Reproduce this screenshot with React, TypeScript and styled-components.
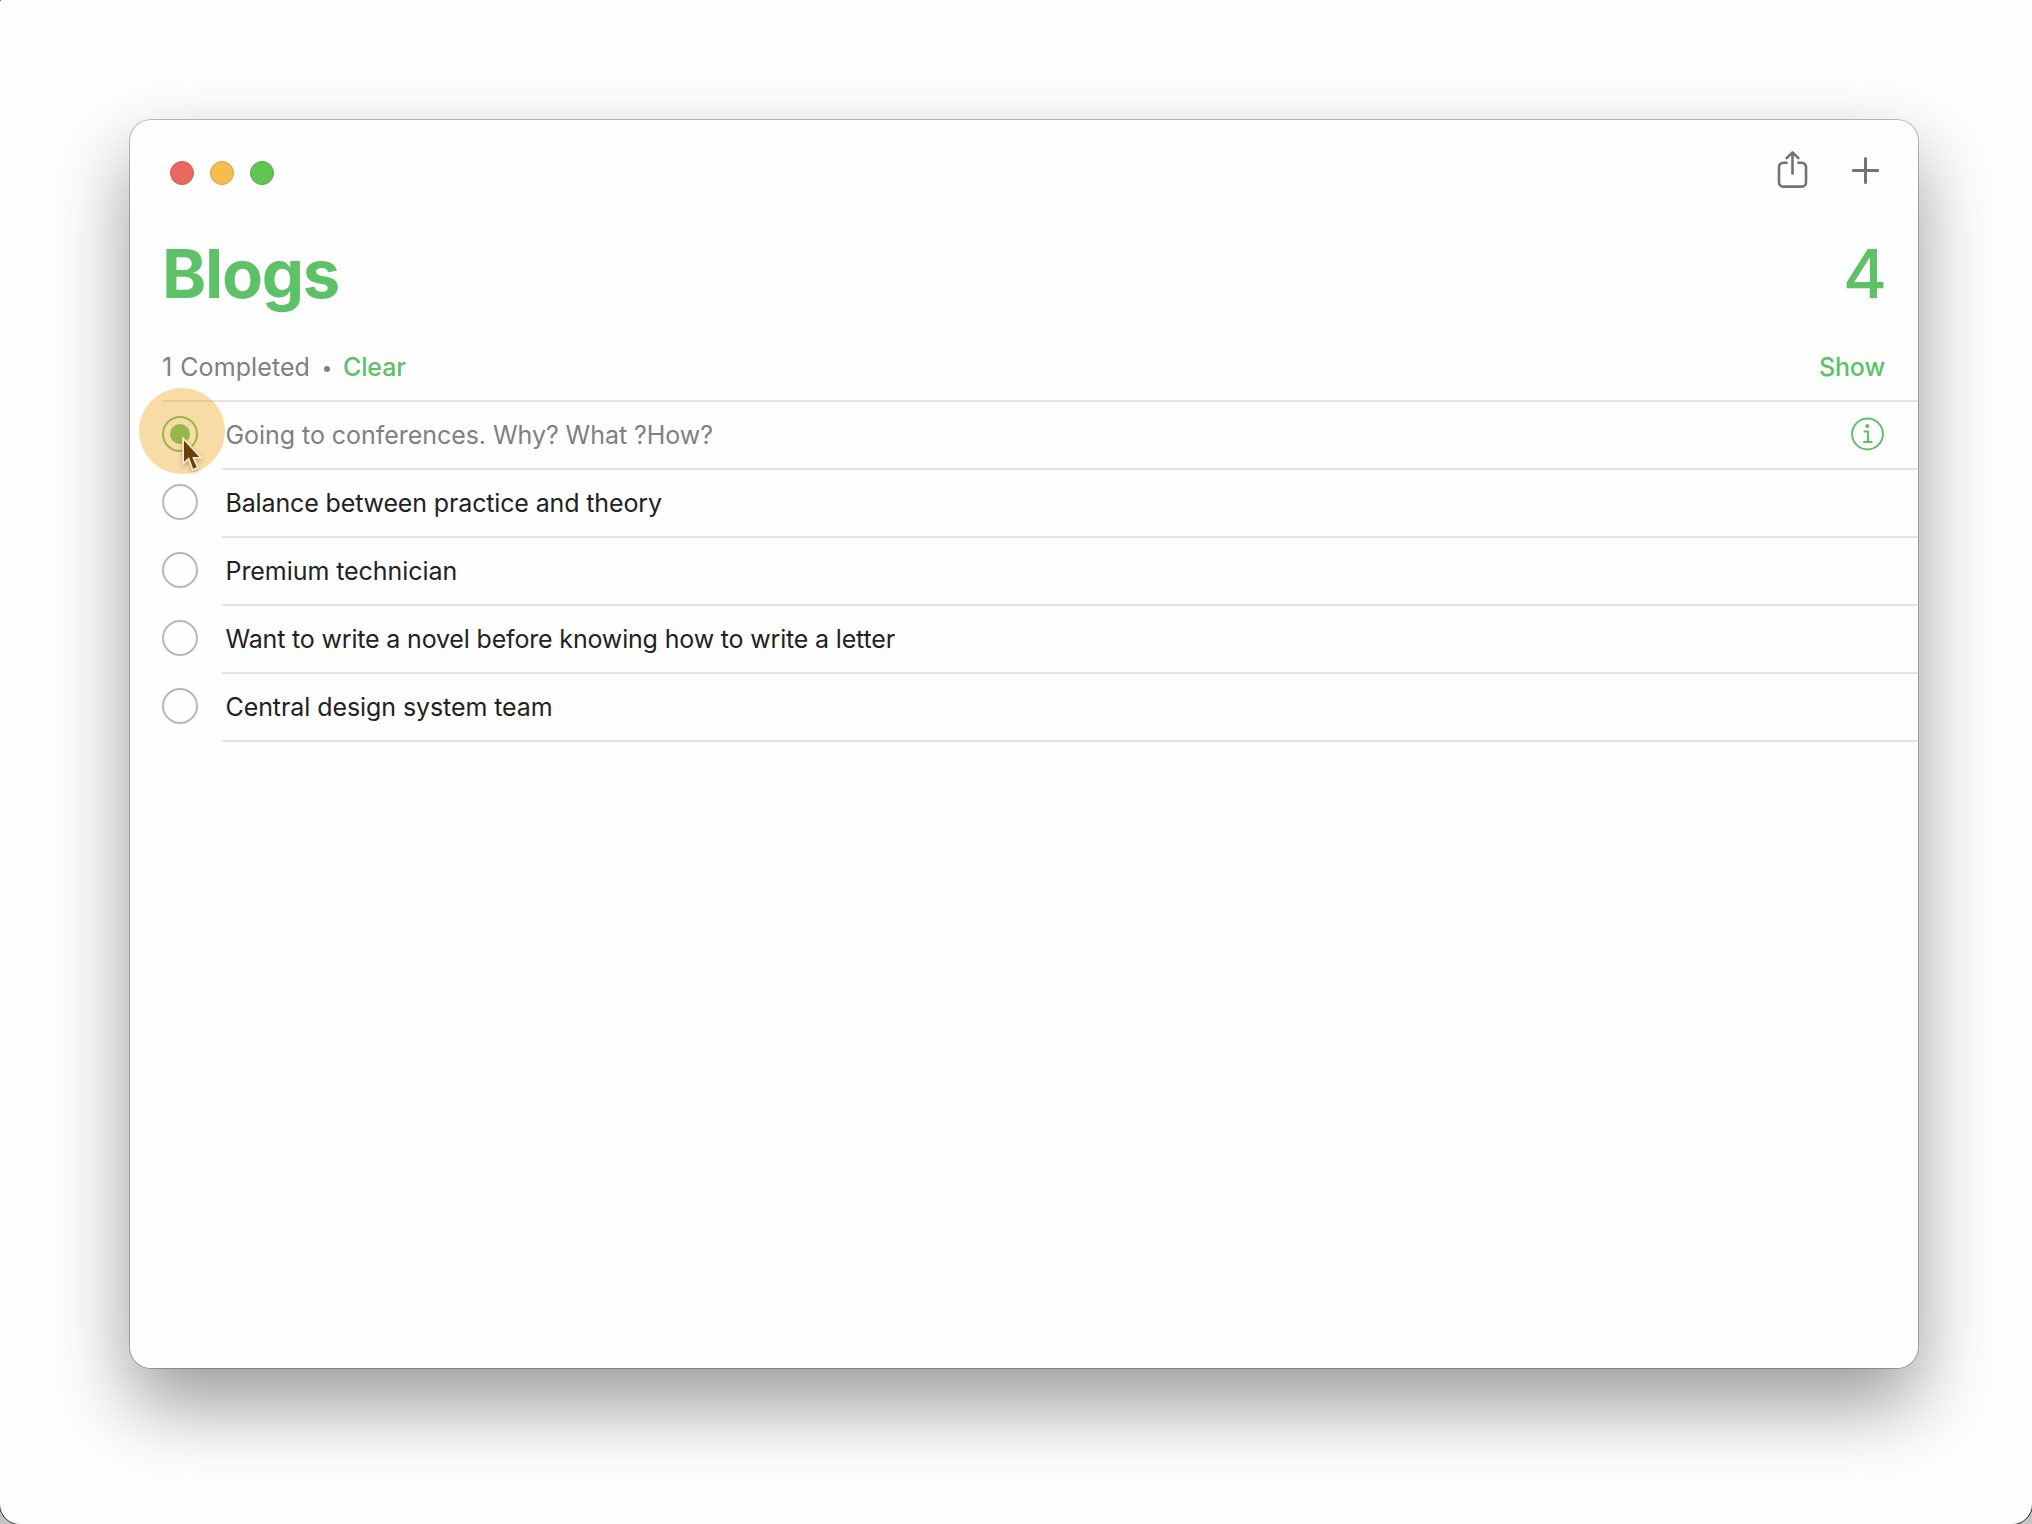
import React from "react";
import styled, { createGlobalStyle } from "styled-components";

const GREEN = "#5dc168";
const GREY = "#808080";

const GlobalStyle = createGlobalStyle`
  * { box-sizing: border-box; }
  html, body { margin: 0; padding: 0; background: #c4c4c4; }
  body { font-family: Inter, "Liberation Sans", sans-serif; -webkit-font-smoothing: antialiased; }
`;

const Desktop = styled.main`
  width: 2032px;
  height: 1524px;
  padding: 120px 114px 156px 130px;
  background: #fefefe;
  border-radius: 2px 0 20px 20px;
  box-shadow: 0 0 0 1px #3c3c3c;
  overflow: hidden;
`;

const Window = styled.section`
  width: 1788px;
  height: 1248px;
  border-radius: 21px;
  background: #fefefe;
  box-shadow: 0 0 0 1px rgba(0, 0, 0, 0.24), 0 36px 78px rgba(0, 0, 0, 0.4);
`;

const TitleBar = styled.header`
  display: flex;
  justify-content: space-between;
  align-items: flex-start;
  height: 104px;
  padding: 28px 36px 0 40px;
`;

const Lights = styled.div`
  display: flex;
  gap: 16px;
  padding-top: 13px;
`;

const Light = styled.span<{ $fill: string; $edge: string }>`
  width: 24px;
  height: 24px;
  border-radius: 50%;
  background: ${(p) => p.$fill};
  border: 1px solid ${(p) => p.$edge};
`;

const Tools = styled.div`
  display: flex;
  gap: 40px;
  color: #737373;
`;

const Icon = styled.svg`
  display: block;
  fill: none;
  stroke: currentColor;
  stroke-linecap: round;
  stroke-linejoin: round;
`;

const Heading = styled.div`
  display: flex;
  justify-content: space-between;
  height: 112px;
  padding: 10px 31px 0 32px;
  color: ${GREEN};
  line-height: 80px;
`;

const Title = styled.h1`
  margin: 0;
  font-size: 67px;
  font-weight: 700;
  letter-spacing: -1.3px;
`;

const Count = styled.span`
  font-size: 67px;
  font-weight: 500;
`;

const Summary = styled.div`
  display: flex;
  align-items: center;
  height: 64px;
  margin-left: 32px;
  padding: 0 33px 2px 0;
  font-size: 25px;
  color: ${GREY};
`;

const Completed = styled.span`
  letter-spacing: 0.1px;
  word-spacing: 0.8px;
`;

const Dot = styled.span`
  width: 6px;
  height: 6px;
  margin: 4px 13px 0 14px;
  border-radius: 50%;
  background: ${GREY};
`;

const Action = styled.button<{ $end?: boolean }>`
  margin: 0 0 0 ${(p) => (p.$end ? "auto" : "0")};
  padding: 0;
  border: 0;
  background: none;
  color: ${GREEN};
  font: inherit;
  font-weight: 500;
  letter-spacing: -0.15px;
`;

const List = styled.ul`
  margin: 0 0 0 32px;
  padding: 0;
  list-style: none;
  border-top: 2px solid #e3e3e3;
`;

const Row = styled.li`
  position: relative;
  display: flex;
  align-items: center;
  gap: 24px;
  height: 68px;
`;

const Check = styled.span<{ $on?: boolean }>`
  display: grid;
  place-items: center;
  flex: none;
  width: 36px;
  height: 36px;
  margin-bottom: 4px;
  border: 2px solid ${(p) => (p.$on ? GREEN : "#b9b9b9")};
  border-radius: 50%;
  &::after {
    content: "";
    width: 20px;
    height: 20px;
    border-radius: 50%;
    background: ${(p) => (p.$on ? GREEN : "transparent")};
  }
`;

const Label = styled.div<{ $muted?: boolean; $tracking: number }>`
  display: flex;
  align-items: center;
  justify-content: space-between;
  flex: 1;
  height: 68px;
  padding: 0 34px 0 3.5px;
  border-bottom: 2px solid #e3e3e3;
  font-size: 25px;
  letter-spacing: ${(p) => p.$tracking}px;
  color: ${(p) => (p.$muted ? GREY : "#222")};
`;

const Info = styled(Icon)`
  color: ${GREEN};
  margin-bottom: 3px;
`;

const Pointer = styled.svg`
  position: absolute;
  left: 18px;
  top: 33px;
  width: 26px;
  height: 42px;
  overflow: visible;
  filter: drop-shadow(0 2px 2px rgba(60, 35, 0, 0.3));
`;

const ClickHalo = styled.span`
  position: absolute;
  left: -23px;
  top: -14px;
  width: 86px;
  height: 86px;
  border-radius: 50%;
  background: rgba(240, 167, 32, 0.4);
`;

const items = [
  { text: "Going to conferences. Why? What ?How?", done: true, tracking: -0.05 },
  { text: "Balance between practice and theory", tracking: -0.14 },
  { text: "Premium technician", tracking: -0.06 },
  { text: "Want to write a novel before knowing how to write a letter", tracking: -0.17 },
  { text: "Central design system team", tracking: -0.08 },
];

export default function App() {
  return (
    <>
      <GlobalStyle />
      <Desktop>
        <Window>
          <TitleBar>
            <Lights>
              <Light $fill="#ea695e" $edge="#cf5a50" />
              <Light $fill="#f4be4f" $edge="#d6a343" />
              <Light $fill="#61c554" $edge="#52a846" />
            </Lights>
            <Tools>
              <Icon width="36" height="44" viewBox="0 0 36 44" strokeWidth="2.6">
                <path d="M13.6 14.8H9.2A4.2 4.2 0 0 0 5 19v15.4a4.2 4.2 0 0 0 4.2 4.2h18.6a4.2 4.2 0 0 0 4.2-4.2V19a4.2 4.2 0 0 0-4.2-4.2h-4.4" strokeLinecap="butt" />
                <path d="M18.5 25.6V4.6M12.6 10.2l5.9-5.9 5.9 5.9" strokeWidth="2.6" />
              </Icon>
              <Icon width="32" height="44" viewBox="0 0 32 44" strokeWidth="3">
                <path d="M15.5 10.4v24.2M3.4 22.5h24.2" />
              </Icon>
            </Tools>
          </TitleBar>
          <Heading>
            <Title>Blogs</Title>
            <Count>4</Count>
          </Heading>
          <Summary>
            <Completed>1 Completed</Completed>
            <Dot />
            <Action>Clear</Action>
            <Action $end>Show</Action>
          </Summary>
          <List>
            {items.map((item) => (
              <Row key={item.text}>
                <Check $on={item.done} />
                <Label $muted={item.done} $tracking={item.tracking}>
                  {item.text}
                  {item.done && (
                    <Info width="33" height="34" viewBox="0 0 33 34" strokeWidth="2">
                      <circle cx="16.5" cy="17" r="15.4" />
                      <circle cx="16.3" cy="9" r="2" fill="currentColor" stroke="none" />
                      <path d="M13.6 14.4h3.4v10.4M13 24.9h7.6" />
                    </Info>
                  )}
                </Label>
                {item.done && (
                  <>
                    <ClickHalo />
                    <Pointer viewBox="0 0 26 42">
                      <path
                        d="M4 5.5v21.2l5-4.4 4.2 11.4 3.5-1.5-4.5-10.3h7z"
                        fill="#66430d"
                        stroke="#fbe8ca"
                        strokeWidth="3.6"
                        paintOrder="stroke"
                        strokeLinejoin="miter"
                      />
                    </Pointer>
                  </>
                )}
              </Row>
            ))}
          </List>
        </Window>
      </Desktop>
    </>
  );
}
